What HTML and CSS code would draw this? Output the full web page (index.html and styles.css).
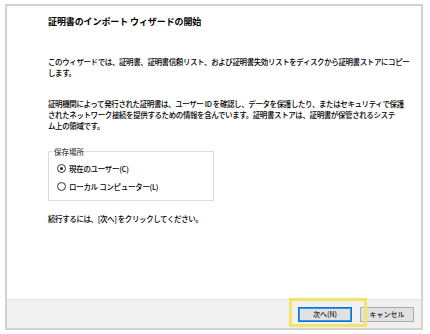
FILE: index.html
```html
<!DOCTYPE html>
<html lang="ja">
<head>
    <meta charset="UTF-8">
    <title>証明書のインポート ウィザード</title>
    <link rel="stylesheet" href="styles.css">
</head>
<body>
    <div class="wizard">
        <div class="content">
            <h1 class="title">証明書のインポート ウィザードの開始</h1>

            <p class="text">このウィザードでは、証明書、証明書信頼リスト、および証明書失効リストをディスクから証明書ストアにコピー<br>します。</p>

            <p class="text text-tight">証明機関によって発行された証明書は、ユーザー ID を確認し、データを保護したり、またはセキュリティで保護<br>されたネットワーク接続を提供するための情報を含んでいます。証明書ストアは、証明書が保管されるシステ<br>ム上の領域です。</p>

            <fieldset class="store">
                <legend>保存場所</legend>
                <label class="radio-row"><span class="radio checked"></span>現在のユーザー(C)</label>
                <label class="radio-row"><span class="radio"></span>ローカル コンピューター(L)</label>
            </fieldset>

            <p class="text">続行するには、[次へ] をクリックしてください。</p>
        </div>

        <div class="footer">
            <button class="btn btn-default">次へ(N)</button>
            <button class="btn">キャンセル</button>
            <div class="highlight"></div>
        </div>
    </div>
</body>
</html>
```

FILE: styles.css
```css
body {
    margin: 0;
    padding: 4px 7px 4px 5px;
    background-color: white;
    font-family: "Noto Sans CJK JP", "Noto Sans", sans-serif;
    color: #000;
}
.wizard {
    height: 322px;
    border: 2px solid #d2d2d2;
    display: flex;
    flex-direction: column;
    background-color: white;
}
.content {
    flex: 1;
    padding: 10px 0 0 41px;
}
.title {
    margin: 0 0 28px 0;
    font-size: 9px;
    font-weight: bold;
    letter-spacing: -0.1px;
    line-height: 12px;
}
.text {
    margin: 0 0 20px 0;
    font-size: 7.5px;
    font-weight: 500;
    letter-spacing: -0.4px;
    line-height: 11px;
    white-space: nowrap;
}
.text-tight {
    margin-bottom: 15px;
}
.store {
    width: 150px;
    margin: 0 0 12px 0;
    padding: 2px 6px 5px 8px;
    border: 1px solid #dcdcdc;
}
.store legend {
    padding: 0 1px;
    margin-left: -4px;
    font-size: 7.5px;
    font-weight: 500;
    color: #444;
}
.radio-row {
    display: flex;
    align-items: center;
    gap: 3px;
    height: 18px;
    font-size: 7.5px;
    font-weight: 500;
    letter-spacing: -0.3px;
}
.radio {
    width: 7px;
    height: 7px;
    border: 1px solid #333;
    border-radius: 50%;
    position: relative;
}
.radio.checked::after {
    content: "";
    position: absolute;
    left: 2px;
    top: 2px;
    width: 3px;
    height: 3px;
    border-radius: 50%;
    background-color: #222;
}
.footer {
    position: relative;
    height: 28px;
    background-color: #f0f0f0;
    border-top: 1px solid #e4e4e4;
    display: flex;
    justify-content: flex-end;
    align-items: center;
    gap: 8px;
    padding-right: 7px;
}
.btn {
    width: 54px;
    height: 15px;
    padding: 0;
    background-color: #e1e1e1;
    border: 1px solid #adadad;
    font-family: "Noto Sans CJK JP", "Noto Sans", sans-serif;
    font-size: 7px;
    font-weight: 500;
    color: #222;
}
.btn-default {
    border: 1px solid #0078d7;
    box-shadow: inset 0 0 0 1px #3d95dc;
}
.highlight {
    position: absolute;
    left: 282px;
    top: -2px;
    width: 72px;
    height: 23px;
    border: 3px solid #f3e46c;
}
```
